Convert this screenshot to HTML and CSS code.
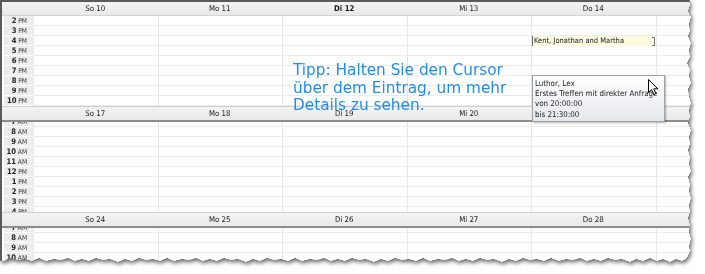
FILE: index.html
```
<!DOCTYPE html>
<html lang="de">
<head>
    <meta charset="UTF-8">
    <title>Kalender - Wochenansicht</title>
    <link rel="stylesheet" href="styles.css">
</head>
<body>
    <div class="sheet">
        <div class="calendar">
            <section class="week week-first">
                <div class="week-head">
                    <span></span>
                    <span>So 10</span>
                    <span>Mo 11</span>
                    <span class="today">Di 12</span>
                    <span>Mi 13</span>
                    <span>Do 14</span>
                    <span></span>
                </div>
                <div class="week-body">
                    <div class="week-grid">
                        <div class="gutter">
                            <div class="hour"><b>2</b> PM</div>
                            <div class="hour"><b>3</b> PM</div>
                            <div class="hour"><b>4</b> PM</div>
                            <div class="hour"><b>5</b> PM</div>
                            <div class="hour"><b>6</b> PM</div>
                            <div class="hour"><b>7</b> PM</div>
                            <div class="hour"><b>8</b> PM</div>
                            <div class="hour"><b>9</b> PM</div>
                            <div class="hour"><b>10</b> PM</div>
                        </div>
                        <div class="day"></div>
                        <div class="day"></div>
                        <div class="day"></div>
                        <div class="day"></div>
                        <div class="day">
                            <div class="event">
                                <span>Kent, Jonathan and Martha</span>
                                <i class="event-end"></i>
                            </div>
                        </div>
                        <div class="day"></div>
                    </div>
                </div>
            </section>

            <section class="week">
                <div class="week-head">
                    <span></span>
                    <span>So 17</span>
                    <span>Mo 18</span>
                    <span>Di 19</span>
                    <span>Mi 20</span>
                    <span>Do 21</span>
                    <span></span>
                </div>
                <div class="week-body">
                    <div class="week-grid">
                        <div class="gutter">
                            <div class="hour"><b>7</b> AM</div>
                            <div class="hour"><b>8</b> AM</div>
                            <div class="hour"><b>9</b> AM</div>
                            <div class="hour"><b>10</b> AM</div>
                            <div class="hour"><b>11</b> AM</div>
                            <div class="hour"><b>12</b> PM</div>
                            <div class="hour"><b>1</b> PM</div>
                            <div class="hour"><b>2</b> PM</div>
                            <div class="hour"><b>3</b> PM</div>
                            <div class="hour"><b>4</b> PM</div>
                        </div>
                        <div class="day"></div>
                        <div class="day"></div>
                        <div class="day"></div>
                        <div class="day"></div>
                        <div class="day"></div>
                        <div class="day"></div>
                    </div>
                </div>
            </section>

            <section class="week week-last">
                <div class="week-head">
                    <span></span>
                    <span>So 24</span>
                    <span>Mo 25</span>
                    <span>Di 26</span>
                    <span>Mi 27</span>
                    <span>Do 28</span>
                    <span></span>
                </div>
                <div class="week-body">
                    <div class="week-grid">
                        <div class="gutter">
                            <div class="hour"><b>7</b> AM</div>
                            <div class="hour"><b>8</b> AM</div>
                            <div class="hour"><b>9</b> AM</div>
                            <div class="hour"><b>10</b> AM</div>
                        </div>
                        <div class="day"></div>
                        <div class="day"></div>
                        <div class="day"></div>
                        <div class="day"></div>
                        <div class="day"></div>
                        <div class="day"></div>
                    </div>
                </div>
            </section>

            <p class="hint">Tipp: Halten Sie den Cursor<br>über dem Eintrag, um mehr<br>Details zu sehen.</p>

            <div class="popup">
                <div>Luthor, Lex</div>
                <div>Erstes Treffen mit direkter Anfrage</div>
                <div>von 20:00:00</div>
                <div>bis 21:30:00</div>
            </div>

            <svg class="cursor" width="12" height="18" viewBox="0 0 12 18">
                <path d="M0.5 0.5 L0.5 13.5 L3.6 10.6 L5.8 15.6 L7.9 14.7 L5.8 9.8 L9.8 9.8 Z" fill="#fff" stroke="#000" stroke-width="1" stroke-linejoin="miter"/>
            </svg>
        </div>
    </div>
</body>
</html>
```

FILE: styles.css
```
body {
    margin: 0;
    background-color: #fff;
    font-family: 'DejaVu Sans Condensed', 'DejaVu Sans', sans-serif;
    color: #222;
}

/* torn paper look */
.sheet {
    width: 705px;
    height: 274px;
    filter: drop-shadow(0 0 0.7px #111) drop-shadow(0 0 0.4px #333) drop-shadow(1px 2px 2px rgba(0, 0, 0, 0.6));
}
.calendar {
    position: relative;
    width: 700px;
    height: 266px;
    box-sizing: border-box;
    border-left: 2px solid #5a5a5a;
    border-top: 2px solid #5a5a5a;
    background-color: #fff;
    overflow: hidden;
    clip-path: polygon(0 0, 689px 0, 690px 5px, 688px 11px, 691px 17px, 689px 24px, 690px 31px, 688px 36px, 691px 43px, 689px 50px, 690px 57px, 687px 63px, 690px 69px, 689px 76px, 691px 83px, 688px 89px, 689px 96px, 691px 103px, 689px 110px, 690px 117px, 688px 123px, 691px 130px, 689px 137px, 690px 144px, 688px 150px, 690px 157px, 689px 164px, 691px 171px, 688px 177px, 690px 184px, 689px 191px, 691px 198px, 689px 205px, 690px 212px, 688px 218px, 690px 225px, 689px 232px, 691px 239px, 689px 246px, 690px 251px, 688px 256px, 686px 259px, 682px 261px, 676px 259px, 670px 262px, 663px 259px, 657px 261px, 650px 258px, 643px 261px, 636px 259px, 630px 262px, 622px 259px, 615px 260px, 608px 258px, 601px 261px, 594px 259px, 587px 261px, 580px 258px, 573px 260px, 566px 259px, 559px 261px, 551px 258px, 544px 261px, 537px 259px, 530px 260px, 523px 258px, 516px 261px, 509px 259px, 502px 262px, 494px 259px, 487px 260px, 480px 258px, 473px 261px, 466px 259px, 459px 261px, 452px 258px, 445px 260px, 438px 259px, 430px 261px, 423px 258px, 416px 261px, 409px 259px, 402px 260px, 395px 258px, 388px 261px, 381px 259px, 374px 262px, 366px 259px, 359px 260px, 352px 258px, 345px 261px, 338px 259px, 331px 261px, 324px 258px, 317px 260px, 310px 259px, 302px 261px, 295px 258px, 288px 261px, 281px 259px, 274px 260px, 267px 258px, 260px 261px, 253px 259px, 246px 262px, 238px 259px, 231px 260px, 224px 258px, 217px 261px, 210px 259px, 203px 261px, 196px 258px, 189px 260px, 182px 259px, 174px 261px, 167px 258px, 160px 261px, 153px 259px, 146px 260px, 139px 258px, 132px 261px, 125px 259px, 118px 262px, 110px 259px, 103px 260px, 96px 258px, 89px 261px, 82px 259px, 75px 261px, 68px 258px, 61px 260px, 54px 259px, 46px 261px, 39px 258px, 32px 261px, 25px 259px, 18px 260px, 11px 258px, 4px 261px, 0 260px);
}

/* week blocks */
.week-head {
    display: grid;
    grid-template-columns: 31px repeat(5, 124.5px) 1fr;
    height: 14px;
    box-sizing: border-box;
    background: linear-gradient(#f3f3f3, #e9e9e9);
    border-bottom: 1px solid #d4d4d4;
    font-size: 7.8px;
    line-height: 13px;
    text-align: center;
    color: #1a1a1a;
}
.week-head .today {
    font-weight: bold;
}
.week + .week .week-head {
    border-top: 1px solid #d0d0d0;
    border-bottom: 2px solid #8c8c8c;
    height: 16px;
}
.week-body {
    height: 90px;
    overflow: hidden;
}
.week-last .week-body {
    height: 40px;
}
.week-grid {
    display: grid;
    grid-template-columns: 31px repeat(5, 124.5px) 1fr;
}
.week + .week .week-grid {
    margin-top: -5px;
}

.gutter {
    background-color: #fff;
}
.hour {
    height: 10px;
    box-sizing: border-box;
    margin-left: 2px;
    padding-right: 6px;
    background-color: #ededed;
    border-bottom: 1px solid #fff;
    text-align: right;
    font-size: 6.6px;
    line-height: 10px;
    color: #333;
}
.hour b {
    font-size: 7.6px;
    color: #222;
}

.day {
    border-left: 1px solid #e6e6e6;
    background: repeating-linear-gradient(to bottom, #fff 0 9px, #ececec 9px 10px);
}

/* appointment */
.event {
    display: flex;
    align-items: center;
    margin-top: 20px;
    height: 10px;
    box-sizing: border-box;
    border-left: 1px solid #666;
    background-color: #fcfadf;
    font-size: 7.5px;
    line-height: 10px;
    padding-left: 1px;
    color: #222;
}
.event-end {
    margin-left: auto;
    margin-right: 1px;
    width: 2px;
    height: 7px;
    border: 1px solid #777;
    border-left: none;
}

/* overlays */
.hint {
    position: absolute;
    left: 291px;
    top: 60px;
    margin: 0;
    font-family: 'DejaVu Sans', sans-serif;
    font-size: 15.3px;
    line-height: 17.5px;
    color: #1f8cf2;
}
.popup {
    position: absolute;
    left: 530px;
    top: 73px;
    width: 133px;
    height: 47px;
    box-sizing: border-box;
    padding: 3px 0 0 2px;
    border: 1px solid #a0a0a0;
    background: linear-gradient(#fff, #e4e7ed);
    box-shadow: 1px 1px 2px rgba(0, 0, 0, 0.3);
    font-size: 7.9px;
    line-height: 10.2px;
    white-space: nowrap;
    color: #1a1a1a;
}
.cursor {
    position: absolute;
    left: 646px;
    top: 77px;
}
```
